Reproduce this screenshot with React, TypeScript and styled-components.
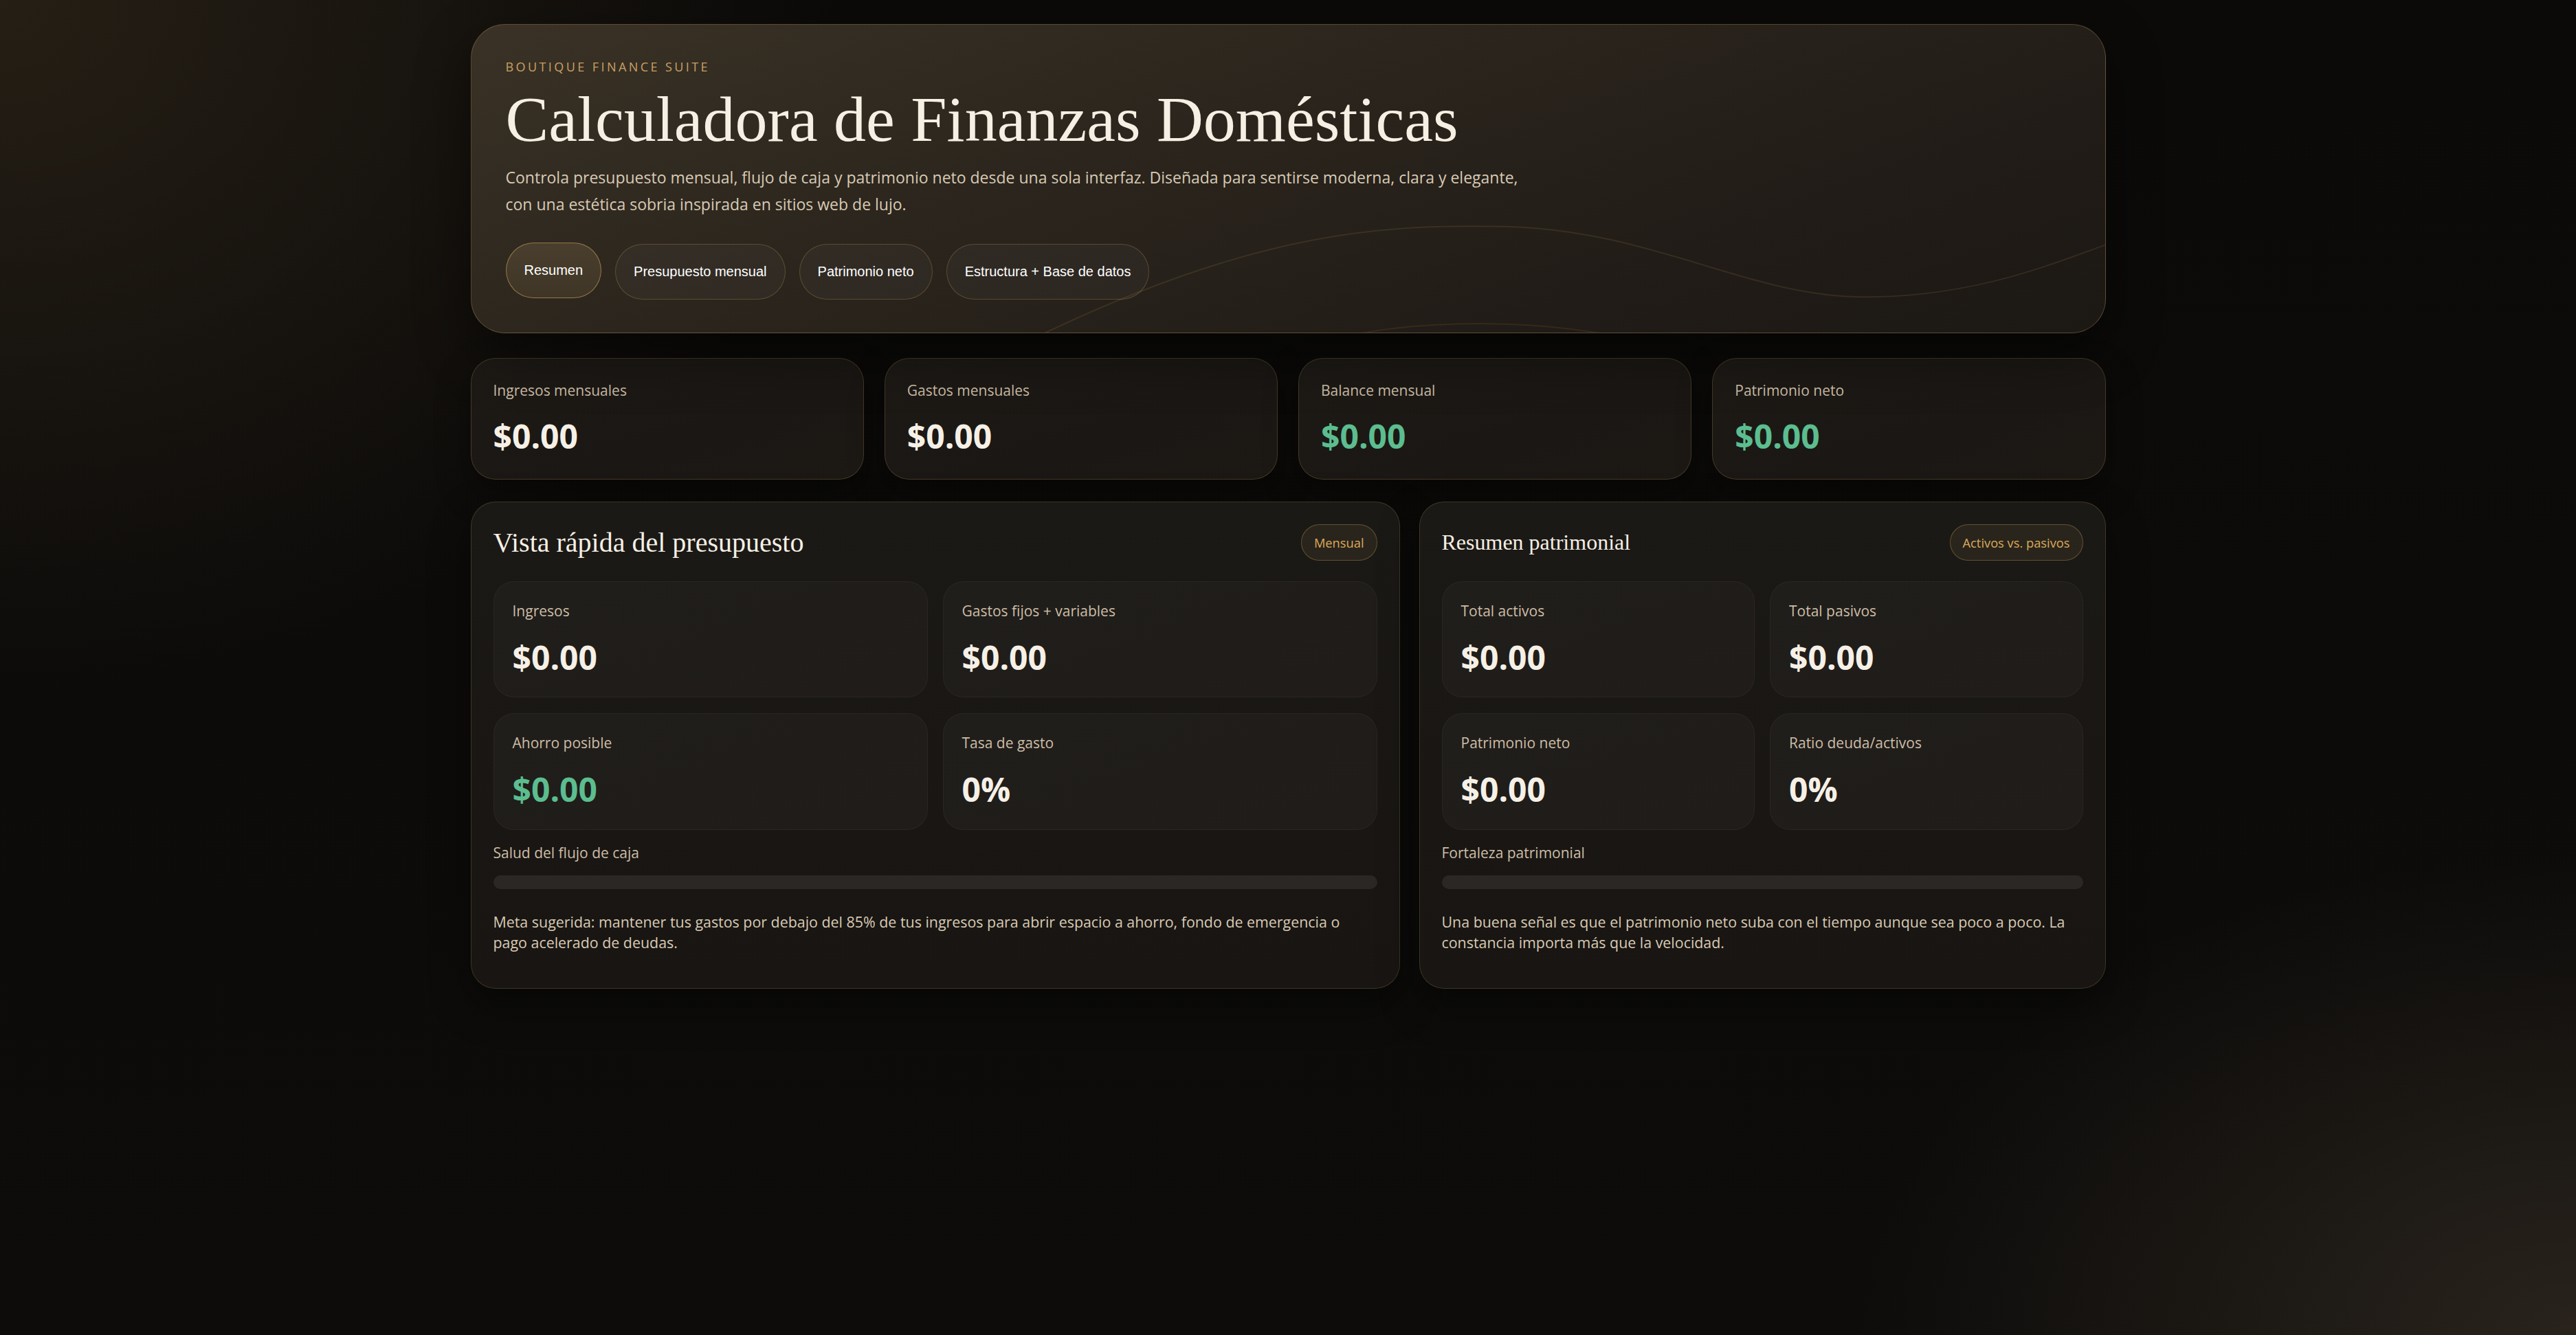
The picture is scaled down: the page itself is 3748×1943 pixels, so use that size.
import React from 'react';
import styled, { createGlobalStyle } from 'styled-components';

const GlobalStyle = createGlobalStyle`
  * {
    box-sizing: border-box;
  }

  html,
  body {
    margin: 0;
    padding: 0;
    background: #0c0b09;
  }

  body {
    font-family: 'Open Sans', 'Noto Sans', sans-serif;
    color: #f4eee4;
  }
`;

const Page = styled.div`
  min-height: 100vh;
  padding: 35px 0 60px;
  background:
    radial-gradient(ellipse 1700px 1400px at 0% 0%, rgba(64, 51, 33, 0.5), transparent 72%),
    radial-gradient(ellipse 1500px 1000px at 100% 100%, rgba(64, 54, 42, 0.55), transparent 70%),
    linear-gradient(180deg, #0b0a09 0%, #0d0c0b 100%);
`;

const Shell = styled.main`
  width: 2379px;
  margin: 0 auto;
`;

const Hero = styled.header`
  position: relative;
  overflow: hidden;
  padding: 51px 50px 48px;
  border: 1px solid rgba(201, 162, 92, 0.32);
  border-radius: 50px;
  background: linear-gradient(160deg, #3a3226 0%, #2b251d 40%, #211c17 75%, #1c1814 100%);
  box-shadow: 0 30px 80px rgba(0, 0, 0, 0.45);
`;

const HeroContent = styled.div`
  position: relative;
  z-index: 1;
`;

const Waves = styled.svg`
  position: absolute;
  inset: 0;
  width: 100%;
  height: 100%;
  pointer-events: none;
`;

const Eyebrow = styled.div`
  font-size: 18px;
  line-height: 1.2;
  letter-spacing: 0.19em;
  text-transform: uppercase;
  color: #c9a063;
`;

const Title = styled.h1`
  margin: 13px 0 0;
  font-family: 'Liberation Serif', 'DejaVu Serif', serif;
  font-weight: 400;
  font-size: 94px;
  line-height: 1.1;
  color: #f5efe4;
`;

const Lead = styled.p`
  margin: 14px 0 0;
  max-width: 1500px;
  font-size: 23px;
  line-height: 39px;
  color: #d8cab4;
`;

const Tabs = styled.nav`
  display: flex;
  gap: 20px;
  margin-top: 38px;
`;

const Tab = styled.button<{ $active?: boolean }>`
  padding: 28px 26px;
  border-radius: 999px;
  border: 1px solid ${p => (p.$active ? 'rgba(201, 162, 92, 0.6)' : 'rgba(201, 162, 92, 0.28)')};
  background: ${p => (p.$active ? 'linear-gradient(180deg, #4a3f2e, #3f3526)' : 'rgba(255, 255, 255, 0.03)')};
  color: #ffffff;
  font-family: 'Liberation Sans', Arial, sans-serif;
  font-size: 20px;
  line-height: 23px;
  cursor: pointer;
  transform: translateY(${p => (p.$active ? '-2px' : '0')});
`;

const StatsGrid = styled.section`
  display: grid;
  grid-template-columns: repeat(4, 1fr);
  gap: 30px;
  margin-top: 36px;
`;

const StatCard = styled.div`
  padding: 32px 32px 35px;
  border: 1px solid rgba(201, 162, 92, 0.24);
  border-radius: 36px;
  background: linear-gradient(160deg, #1d1a16 0%, #1a1714 60%, #1c1915 100%);
  box-shadow: 0 20px 50px rgba(0, 0, 0, 0.35);
`;

const Label = styled.div`
  font-size: 21px;
  line-height: 1.4;
  color: #cdbda6;
`;

const Value = styled.div<{ $positive?: boolean }>`
  margin-top: 26px;
  font-size: 48px;
  font-weight: 700;
  line-height: 1.1;
  color: ${p => (p.$positive ? '#5cbd8f' : '#f6f0e6')};
`;

const PanelsGrid = styled.section`
  display: grid;
  grid-template-columns: 1352fr 999fr;
  gap: 28px;
  margin-top: 32px;
`;

const Panel = styled.article`
  padding: 32px 32px 50px;
  border: 1px solid rgba(201, 162, 92, 0.22);
  border-radius: 36px;
  background: linear-gradient(180deg, #1b1916 0%, #181512 100%);
  box-shadow: 0 24px 60px rgba(0, 0, 0, 0.4);
`;

const PanelHead = styled.div`
  display: flex;
  align-items: center;
  justify-content: space-between;
  margin-bottom: 30px;
`;

const PanelTitle = styled.h2<{ $size: number }>`
  margin: 0;
  font-family: 'Liberation Serif', 'DejaVu Serif', serif;
  font-weight: 400;
  font-size: ${p => p.$size}px;
  line-height: 1.2;
  color: #f5efe4;
`;

const Badge = styled.span`
  padding: 14px 18px;
  border-radius: 999px;
  border: 1px solid rgba(201, 162, 92, 0.35);
  background: rgba(201, 162, 92, 0.09);
  font-size: 18.3px;
  line-height: 23px;
  color: #d9aa5c;
`;

const MetricGrid = styled.div`
  display: grid;
  grid-template-columns: 1fr 1fr;
  gap: 23px 22px;
`;

const MetricCard = styled.div`
  padding: 28px 27px 31px;
  border: 1px solid rgba(255, 255, 255, 0.045);
  border-radius: 30px;
  background: linear-gradient(160deg, #201e1b 0%, #1f1c19 100%);
`;

const MeterLabel = styled(Label)`
  margin-top: 19px;
`;

const Meter = styled.div`
  height: 20px;
  margin-top: 18px;
  border-radius: 999px;
  background: #2a2725;
  overflow: hidden;
`;

const MeterFill = styled.div`
  height: 100%;
  border-radius: inherit;
  background: linear-gradient(90deg, #c9a063, #5cbd8f);
`;

const Note = styled.p`
  margin: 33px 0 0;
  font-size: 21.4px;
  line-height: 30.5px;
  color: #d8cab4;
`;

type Metric = { label: string; value: string; positive?: boolean };

const stats: Metric[] = [
  { label: 'Ingresos mensuales', value: '$0.00' },
  { label: 'Gastos mensuales', value: '$0.00' },
  { label: 'Balance mensual', value: '$0.00', positive: true },
  { label: 'Patrimonio neto', value: '$0.00', positive: true },
];

const budget: Metric[] = [
  { label: 'Ingresos', value: '$0.00' },
  { label: 'Gastos fijos + variables', value: '$0.00' },
  { label: 'Ahorro posible', value: '$0.00', positive: true },
  { label: 'Tasa de gasto', value: '0%' },
];

const wealth: Metric[] = [
  { label: 'Total activos', value: '$0.00' },
  { label: 'Total pasivos', value: '$0.00' },
  { label: 'Patrimonio neto', value: '$0.00' },
  { label: 'Ratio deuda/activos', value: '0%' },
];

const tabs = ['Resumen', 'Presupuesto mensual', 'Patrimonio neto', 'Estructura + Base de datos'];

type PanelProps = {
  title: string;
  titleSize: number;
  badge: string;
  metrics: Metric[];
  meterLabel: string;
  meter: number;
  note: string;
};

const SummaryPanel: React.FC<PanelProps> = ({ title, titleSize, badge, metrics, meterLabel, meter, note }) => (
  <Panel>
    <PanelHead>
      <PanelTitle $size={titleSize}>{title}</PanelTitle>
      <Badge>{badge}</Badge>
    </PanelHead>
    <MetricGrid>
      {metrics.map(m => (
        <MetricCard key={m.label}>
          <Label>{m.label}</Label>
          <Value $positive={m.positive}>{m.value}</Value>
        </MetricCard>
      ))}
    </MetricGrid>
    <MeterLabel>{meterLabel}</MeterLabel>
    <Meter>
      <MeterFill style={{ width: `${meter}%` }} />
    </Meter>
    <Note>{note}</Note>
  </Panel>
);

const App: React.FC = () => {
  const activeTab = 'Resumen';

  return (
    <Page>
      <GlobalStyle />
      <Shell>
        <Hero>
          <Waves viewBox="0 0 2379 450" preserveAspectRatio="none">
            <path
              d="M 832 452 C 1150 300 1330 292 1505 295 C 1720 300 1860 398 2027 398 C 2190 398 2300 350 2390 318"
              fill="none"
              stroke="rgba(201, 162, 92, 0.13)"
              strokeWidth="2"
            />
            <path
              d="M 1290 452 C 1400 432 1530 432 1650 452"
              fill="none"
              stroke="rgba(201, 162, 92, 0.1)"
              strokeWidth="2"
            />
          </Waves>
          <HeroContent>
            <Eyebrow>Boutique Finance Suite</Eyebrow>
            <Title>Calculadora de Finanzas Domésticas</Title>
            <Lead>
              Controla presupuesto mensual, flujo de caja y patrimonio neto desde una sola interfaz. Diseñada para
              sentirse moderna, clara y elegante, con una estética sobria inspirada en sitios web de lujo.
            </Lead>
            <Tabs>
              {tabs.map(t => (
                <Tab key={t} $active={t === activeTab}>
                  {t}
                </Tab>
              ))}
            </Tabs>
          </HeroContent>
        </Hero>

        <StatsGrid>
          {stats.map(s => (
            <StatCard key={s.label}>
              <Label>{s.label}</Label>
              <Value $positive={s.positive}>{s.value}</Value>
            </StatCard>
          ))}
        </StatsGrid>

        <PanelsGrid>
          <SummaryPanel
            title="Vista rápida del presupuesto"
            titleSize={40}
            badge="Mensual"
            metrics={budget}
            meterLabel="Salud del flujo de caja"
            meter={0}
            note="Meta sugerida: mantener tus gastos por debajo del 85% de tus ingresos para abrir espacio a ahorro, fondo de emergencia o pago acelerado de deudas."
          />
          <SummaryPanel
            title="Resumen patrimonial"
            titleSize={32}
            badge="Activos vs. pasivos"
            metrics={wealth}
            meterLabel="Fortaleza patrimonial"
            meter={0}
            note="Una buena señal es que el patrimonio neto suba con el tiempo aunque sea poco a poco. La constancia importa más que la velocidad."
          />
        </PanelsGrid>
      </Shell>
    </Page>
  );
};

export default App;
